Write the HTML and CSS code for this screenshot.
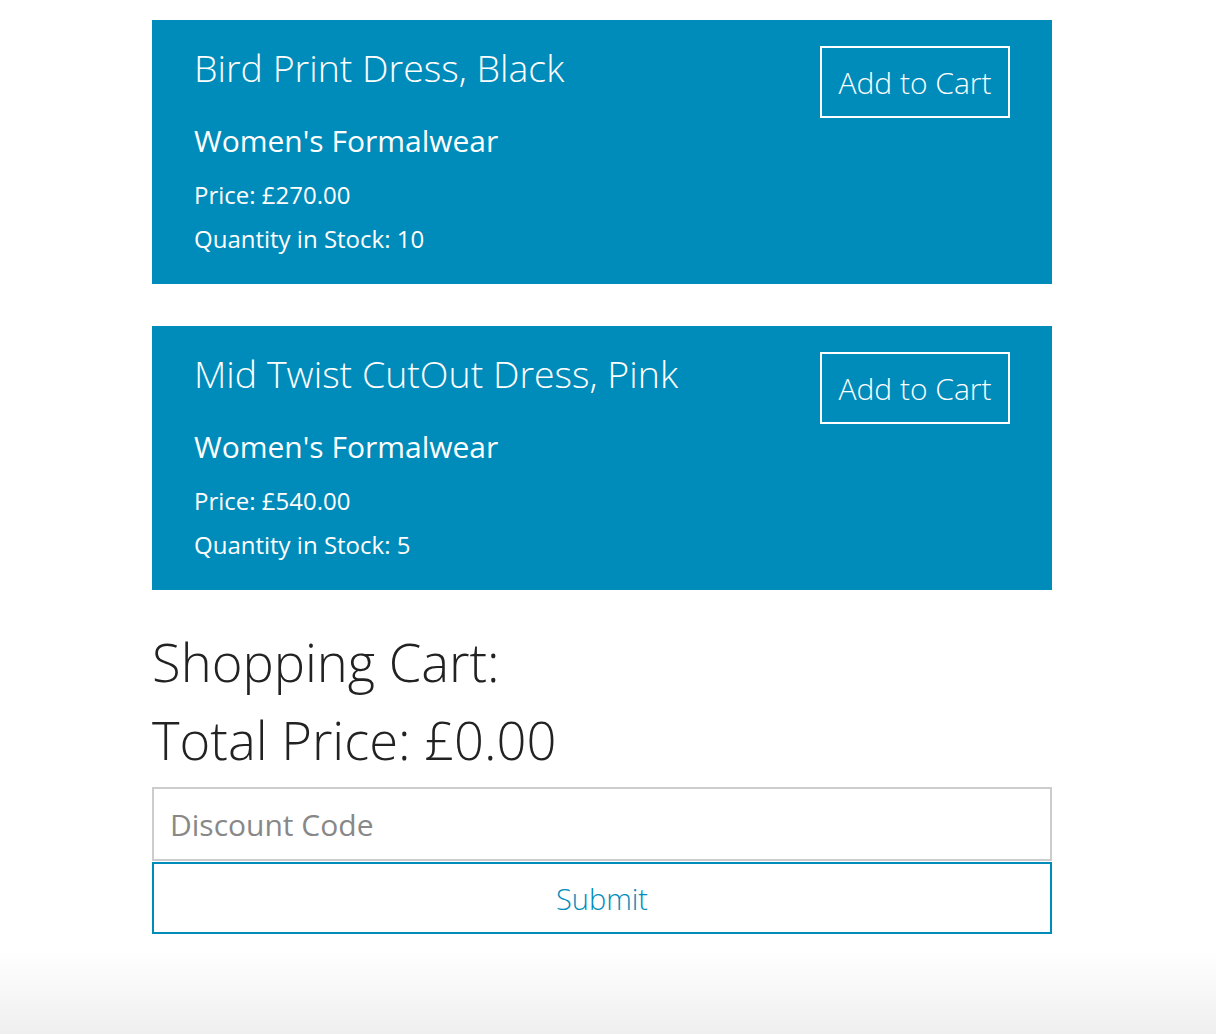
FILE: index.html
```html
<!DOCTYPE html>
<html>
<head>
<meta charset="utf-8">
<link rel="stylesheet" href="styles.css">
</head>
<body>
<main class="page">
  <section class="product">
    <div class="product-info">
      <h2 class="product-title">Bird Print Dress, Black</h2>
      <h3 class="product-category">Women's Formalwear</h3>
      <p class="product-line">Price: £270.00</p>
      <p class="product-line">Quantity in Stock: 10</p>
    </div>
    <button class="add-btn">Add to Cart</button>
  </section>
  <section class="product">
    <div class="product-info">
      <h2 class="product-title">Mid Twist CutOut Dress, Pink</h2>
      <h3 class="product-category">Women's Formalwear</h3>
      <p class="product-line">Price: £540.00</p>
      <p class="product-line">Quantity in Stock: 5</p>
    </div>
    <button class="add-btn">Add to Cart</button>
  </section>
  <section class="cart">
    <h2 class="cart-title">Shopping Cart:</h2>
    <h2 class="cart-total">Total Price: £0.00</h2>
    <input class="discount" type="text" placeholder="Discount Code">
    <button class="submit-btn">Submit</button>
  </section>
</main>
</body>
</html>
```
FILE: styles.css
```css
html, body {
  margin: 0;
  padding: 0;
}
body {
  min-height: 1034px;
  font-family: "Open Sans", sans-serif;
  background: linear-gradient(to bottom, #ffffff 0, #ffffff 950px, #efefef 1034px);
}
.page {
  width: 900px;
  margin: 0 0 0 152px;
  padding-top: 20px;
  display: flex;
  flex-direction: column;
}
.product {
  background: #008cba;
  color: #fff;
  height: 264px;
  box-sizing: border-box;
  padding: 26px 42px 0 42px;
  display: flex;
  justify-content: space-between;
  align-items: flex-start;
  margin-bottom: 42px;
}
.product-info { display: flex; flex-direction: column; }
.product-title {
  margin: 0;
  font-weight: 300;
  font-size: 37.5px;
  line-height: 44px;
}
.product-category {
  margin: 31px 0 0 0;
  font-weight: 400;
  font-size: 30px;
  line-height: 40px;
}
.product-line {
  margin: 17px 0 0 0;
  font-size: 24px;
  line-height: 34px;
}
.product-line + .product-line { margin-top: 10px; }
.add-btn {
  width: 190px;
  height: 72px;
  background: transparent;
  border: 2px solid #fff;
  color: #fff;
  font-family: "Open Sans", sans-serif;
  font-weight: 300;
  font-size: 30px;
  padding: 0;
  cursor: pointer;
}
.cart {
  display: flex;
  flex-direction: column;
  margin-top: -9px;
}
.cart-title, .cart-total {
  margin: 0;
  font-weight: 300;
  color: #222;
  font-size: 52.5px;
  line-height: 78px;
}
.discount {
  margin-top: 8px;
  height: 74px;
  box-sizing: border-box;
  border: 2px solid #cccccc;
  padding: 0 16px;
  font-family: "Open Sans", sans-serif;
  font-size: 30px;
  color: #333;
  outline: none;
}
.discount::placeholder { color: #888888; }
.submit-btn {
  margin-top: 1px;
  height: 72px;
  background: #fff;
  border: 2px solid #008cba;
  color: #008cba;
  font-family: "Open Sans", sans-serif;
  font-weight: 300;
  font-size: 29px;
  cursor: pointer;
}
```
